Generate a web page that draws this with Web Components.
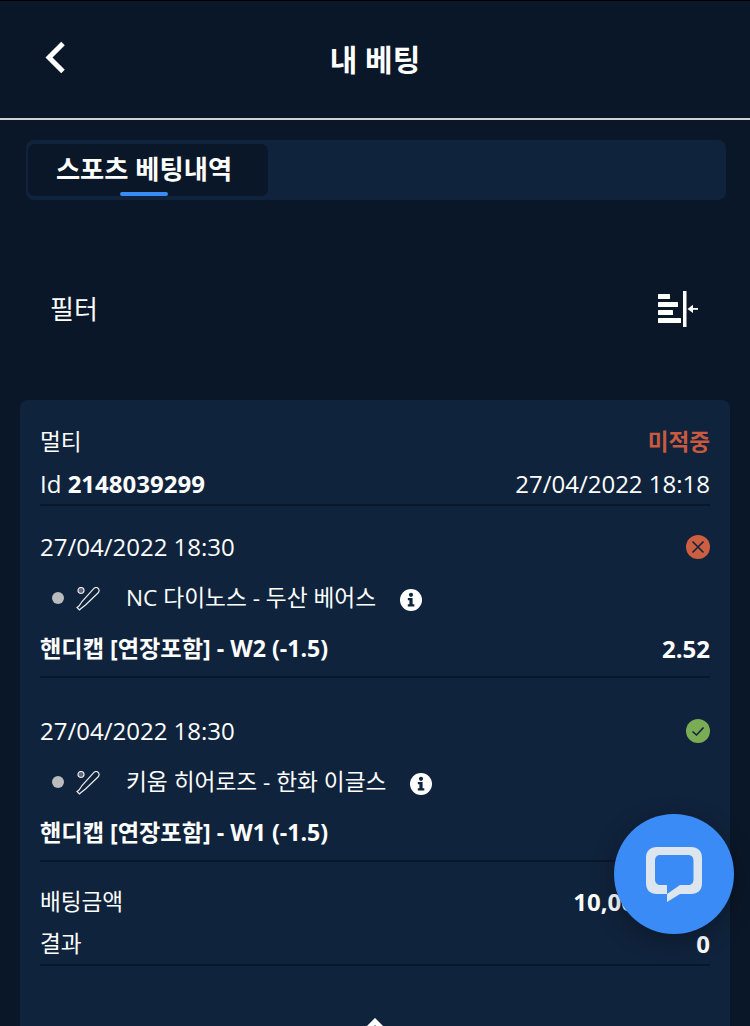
<!DOCTYPE html>
<html lang="ko">
<head>
<meta charset="utf-8">
<title>내 베팅</title>
<style>
  html, body { margin: 0; height: 100%; overflow: hidden; background: #0a1728; }
  body {
    font-family: "Open Sans", "Noto Sans CJK KR", sans-serif;
    color: #fff;
    border-top: 1px solid #000;
    box-sizing: border-box;
  }
</style>
</head>
<body>
<app-header title="내 베팅"></app-header>
<tab-bar label="스포츠 베팅내역"></tab-bar>
<filter-bar label="필터"></filter-bar>
<bet-card>
  <bet-row slot="head" label="멀티" value="미적중" tone="lost"></bet-row>
  <bet-row slot="head" label="Id" strong="2148039299" value="27/04/2022 18:18" plain></bet-row>
  <bet-event date="27/04/2022 18:30" match="NC 다이노스 - 두산 베어스" market="핸디캡 [연장포함] - W2 (-1.5)" odds="2.52" status="lost"></bet-event>
  <bet-event date="27/04/2022 18:30" match="키움 히어로즈 - 한화 이글스" market="핸디캡 [연장포함] - W1 (-1.5)" status="won"></bet-event>
  <bet-row slot="foot" label="배팅금액" value="10,000 KRW"></bet-row>
  <bet-row slot="foot" label="결과" value="0"></bet-row>
</bet-card>
<chat-fab></chat-fab>

<script>
const FONT = '"Open Sans", "Noto Sans CJK KR", sans-serif'

class AppHeader extends HTMLElement {
  connectedCallback() {
    if (this.shadowRoot) return
    this.attachShadow({ mode: 'open' }).innerHTML = `
      <style>
        :host { display: grid; grid-template-columns: 110px 1fr 110px; align-items: center;
                height: 117px; border-bottom: 2px solid #cfd1d4; }
        svg { margin-left: 42px; margin-top: -4px; display: block; }
        h1 { margin: 0; text-align: center; font: 700 30px/1 ${FONT}; color: #fff; }
      </style>
      <svg width="28" height="36" viewBox="0 0 28 36" fill="none" stroke="#fff" stroke-width="5">
        <path d="M21 3.5 7 17.5 21 31.5"/>
      </svg>
      <h1>${this.getAttribute('title')}</h1>
      <span></span>`
  }
}

class TabBar extends HTMLElement {
  connectedCallback() {
    if (this.shadowRoot) return
    this.attachShadow({ mode: 'open' }).innerHTML = `
      <style>
        :host { display: flex; margin: 20px 24px 0 26px; height: 60px; padding: 4px 0 4px 2px;
                box-sizing: border-box; background: #10233c; border-radius: 8px; }
        .tab { position: relative; width: 240px; background: #0a1728; border-radius: 7px;
               display: flex; justify-content: center; align-items: center;
               padding: 0 8px 2px 0; box-sizing: border-box;
               font: 700 26.3px/1 ${FONT}; color: #fff; }
        .tab::after { content: ""; position: absolute; left: 92px; bottom: 0; width: 48px; height: 4px;
                      background: #3b8bf6; border-radius: 2px; }
      </style>
      <div class="tab">${this.getAttribute('label')}</div>`
  }
}

class FilterBar extends HTMLElement {
  connectedCallback() {
    if (this.shadowRoot) return
    this.attachShadow({ mode: 'open' }).innerHTML = `
      <style>
        :host { display: flex; justify-content: space-between; align-items: center;
                height: 200px; padding: 18px 52px 0 50px; box-sizing: border-box;
                font: 400 26px/1 ${FONT}; color: #fff; }
        svg { display: block; }
      </style>
      <span>${this.getAttribute('label')}</span>
      <svg width="40" height="36" viewBox="0 0 40 36" fill="#fff">
        <rect x="0" y="3" width="12" height="5" rx=".6"/>
        <rect x="0" y="11" width="20" height="5" rx=".6"/>
        <rect x="0" y="19" width="15" height="5" rx=".6"/>
        <rect x="0" y="27" width="23" height="5" rx=".6"/>
        <rect x="25" y="0" width="3.5" height="36"/>
        <rect x="34" y="17" width="6" height="1.8"/>
        <path d="M29.5 17.9 35 13.8v8.2z"/>
      </svg>`
  }
}

class BetCard extends HTMLElement {
  connectedCallback() {
    if (this.shadowRoot) return
    this.attachShadow({ mode: 'open' }).innerHTML = `
      <style>
        :host { display: block; margin: 0 20px; padding: 20px 20px 0; background: #10233c;
                border-radius: 8px 8px 0 0; height: 700px; box-sizing: border-box; }
        .block { display: block; border-bottom: 2px solid #0a1728; }
        .head { height: 83px; padding-top: 1px; }
        .foot { height: 83px; margin-top: 19px; }
        .more { display: flex; justify-content: center; margin-top: 52px; }
        svg { display: block; }
      </style>
      <div class="block head"><slot name="head"></slot></div>
      <slot></slot>
      <div class="block foot"><slot name="foot"></slot></div>
      <div class="more">
        <svg width="30" height="16" viewBox="0 0 30 16" fill="none" stroke="#fff" stroke-width="5">
          <path d="M4 14.5 15 3.5 26 14.5"/>
        </svg>
      </div>`
  }
}

class BetRow extends HTMLElement {
  connectedCallback() {
    if (this.shadowRoot) return
    const strong = this.getAttribute('strong')
    this.attachShadow({ mode: 'open' }).innerHTML = `
      <style>
        :host { display: flex; justify-content: space-between; align-items: center; height: 42px;
                font: 400 22.6px/1 ${FONT}; color: #fff; white-space: nowrap; }
        :host([plain]) { font-size: 24px; }
        b { font-weight: 700; }
        .value { font-weight: 700; font-size: 24px; }
        :host([plain]) .value { font-weight: 400; }
        :host([tone="lost"]) .value { color: #c9593f; font-size: 22.6px; }
      </style>
      <span>${this.getAttribute('label')}${strong ? ` <b>${strong}</b>` : ''}</span>
      <span class="value">${this.getAttribute('value')}</span>`
  }
}

class BetEvent extends HTMLElement {
  connectedCallback() {
    if (this.shadowRoot) return
    const won = this.getAttribute('status') === 'won'
    const mark = won
      ? '<path d="M6.5 12.5 10.5 16 17.5 8.5"/>'
      : '<path d="M6.5 6.5 17.5 17.5M17.5 6.5 6.5 17.5"/>'
    this.attachShadow({ mode: 'open' }).innerHTML = `
      <style>
        :host { display: block; height: 172px; padding-top: 20px; margin-bottom: 12px; box-sizing: border-box;
                border-bottom: 2px solid #0a1728; font: 400 24px/1 ${FONT}; color: #fff; }
        .row { display: flex; align-items: center; justify-content: space-between; }
        .date { height: 42px; }
        .match { justify-content: flex-start; height: 60px; padding-left: 12px; font-size: 22.7px; }
        .dot { width: 12px; height: 12px; border-radius: 50%; background: #b9bbbd; margin-right: 12px; }
        .bat { margin-right: 26px; margin-top: 1px; }
        .info { margin-left: 24px; margin-top: 4px; }
        .market { height: 42px; font-weight: 700; }
        .market span:first-child { font-size: 23.2px; }
        svg { display: block; flex: none; }
      </style>
      <div class="row date">
        <span>${this.getAttribute('date')}</span>
        <svg width="24" height="24" viewBox="0 0 24 24">
          <circle cx="12" cy="12" r="12" fill="${won ? '#7aab55' : '#cc5f42'}"/>
          <g fill="none" stroke="#10233c" stroke-width="1.6">${mark}</g>
        </svg>
      </div>
      <div class="row match">
        <span class="dot"></span>
        <svg class="bat" width="24" height="24" viewBox="0 0 24 24" fill="none" stroke="#eceded" stroke-width="1.2">
          <circle cx="5" cy="3.5" r="3"/>
          <path d="M4 1 4 6M6 1 6 6" stroke-width=".7"/>
          <path d="M1 20.5 3.5 23 5 21.5 9.5 18 22 6C23.5 4.5 23.5 2.5 22 1.2 20.5 0 19 .3 17.5 1.8L6 14.5 3 19Z"/>
        </svg>
        <span>${this.getAttribute('match')}</span>
        <svg class="info" width="22" height="22" viewBox="0 0 22 22">
          <circle cx="11" cy="11" r="11" fill="#fff"/>
          <g fill="#10233c">
            <circle cx="11" cy="5.8" r="2.1"/>
            <path d="M7.8 9h4.8v6.2h1.7v2.3H7.8v-2.3h1.6v-3.9H7.8z"/>
          </g>
        </svg>
      </div>
      <div class="row market">
        <span>${this.getAttribute('market')}</span>
        <span>${this.getAttribute('odds') || ''}</span>
      </div>`
  }
}

class ChatFab extends HTMLElement {
  connectedCallback() {
    if (this.shadowRoot) return
    this.attachShadow({ mode: 'open' }).innerHTML = `
      <style>
        :host { position: fixed; left: 614px; top: 814px; width: 120px; height: 120px; border-radius: 50%;
                background: #3b8bf6; box-shadow: 0 6px 24px rgba(0,0,0,.3);
                display: flex; align-items: center; justify-content: center; }
        svg { display: block; margin-top: 1px; }
      </style>
      <svg width="56" height="56" viewBox="0 0 56 56">
        <path fill="#dde6ef" fill-rule="evenodd"
          d="M11 0H45C52 0 56 4 56 11V36C56 43 52 47 45 47H34L21 55V47H11C4 47 0 43 0 36V11C0 4 4 0 11 0ZM14 8C11 8 9 10 9 14V32C9 36 11 38 15 38H21V47L34 38H42C45.5 38 47.5 36 47.5 32V14C47.5 10 45.5 8 42 8Z"/>
      </svg>`
  }
}

customElements.define('app-header', AppHeader)
customElements.define('tab-bar', TabBar)
customElements.define('filter-bar', FilterBar)
customElements.define('bet-card', BetCard)
customElements.define('bet-row', BetRow)
customElements.define('bet-event', BetEvent)
customElements.define('chat-fab', ChatFab)
</script>
</body>
</html>
